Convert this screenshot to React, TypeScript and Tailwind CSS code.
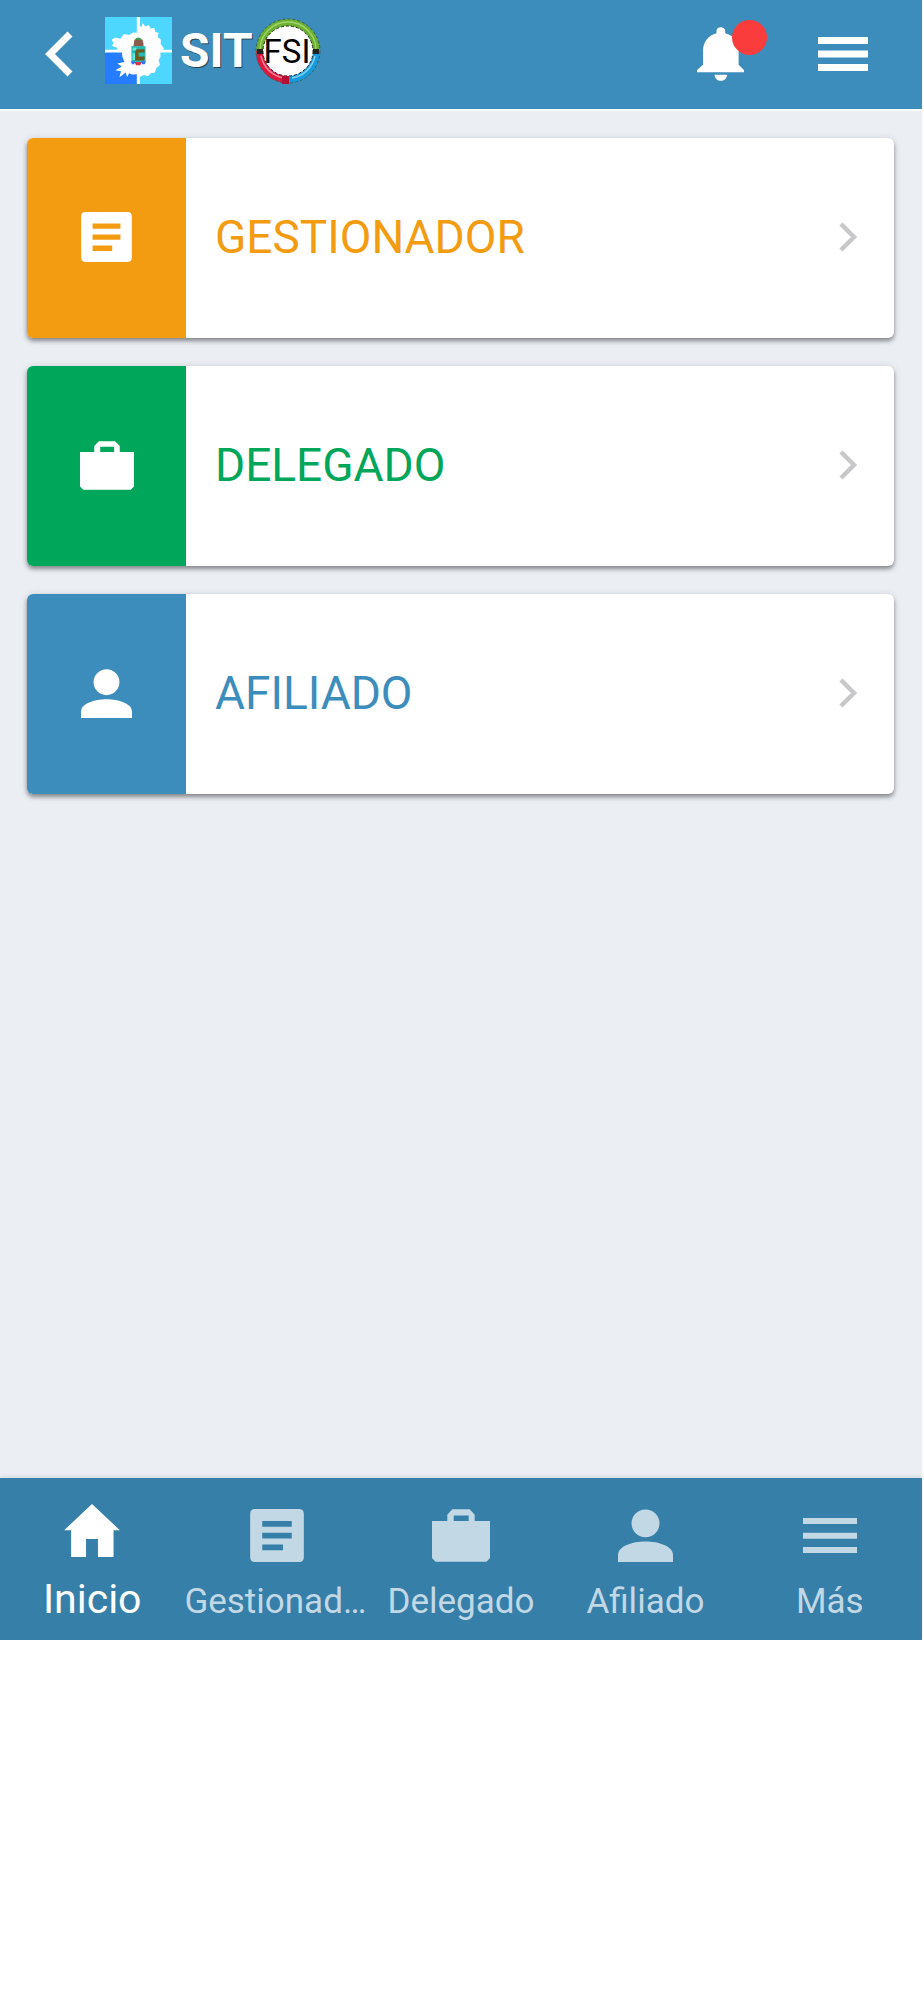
import type { ReactNode } from 'react';

type IconProps = { className?: string };

function ArticleIcon({ className }: IconProps) {
  return (
    <svg viewBox="0 0 160 158" className={className} fill="currentColor" aria-hidden="true">
      <path
        fillRule="evenodd"
        d="M14 0H146Q160 0 160 14V144Q160 158 146 158H14Q0 158 0 144V14Q0 0 14 0ZM36 36V53H124V36ZM36 71V88H124V71ZM36 106V123H98V106Z"
      />
    </svg>
  );
}

function BriefcaseIcon({ className }: IconProps) {
  return (
    <svg viewBox="0 0 163 147" className={className} fill="currentColor" aria-hidden="true">
      <path
        fillRule="evenodd"
        d="M43 33V15L57 0H106L120 15V33H163V137L153 147H10L0 137V33ZM61 17V33H103V17Z"
      />
    </svg>
  );
}

function PersonIcon({ className }: IconProps) {
  return (
    <svg viewBox="0 0 154 148" className={className} fill="currentColor" aria-hidden="true">
      <circle cx="77" cy="40" r="39" />
      <path d="M0 148V129C0 104 40 91 77 91S154 104 154 129V148Z" />
    </svg>
  );
}

function HomeIcon({ className }: IconProps) {
  return (
    <svg viewBox="0 0 168 160" className={className} fill="currentColor" aria-hidden="true">
      <path d="M84 0L168 79H149V160H102V106H66V160H21V79H0Z" />
    </svg>
  );
}

function MenuIcon({ className }: IconProps) {
  return (
    <svg viewBox="0 0 162 105" className={className} fill="currentColor" aria-hidden="true">
      <path d="M0 0H162V18H0ZM0 44H162V62H0ZM0 87H162V105H0Z" />
    </svg>
  );
}

function HeaderMenuIcon({ className }: IconProps) {
  return (
    <svg viewBox="0 0 50 34" className={className} fill="currentColor" aria-hidden="true">
      <path d="M0 0H50V7H0ZM0 13.500H50V20.500H0ZM0 27H50V34H0Z" />
    </svg>
  );
}

function BellIcon({ className }: IconProps) {
  return (
    <svg viewBox="0 0 140 160" className={className} fill="currentColor" aria-hidden="true">
      <path d="M58 18V12C58 4 63 0 71 0S84 4 84 12V18C108 24 124 44 124 70V112L140 128V134H0V128L18 112V70C18 44 34 24 58 18Z" />
      <path d="M52 142H90C88 154 81 160 71 160S54 154 52 142Z" />
    </svg>
  );
}

function CrestLogo({ className }: IconProps) {
  return (
    <svg viewBox="0 0 200 200" className={className} role="img" aria-label="Escudo">
      <path d="M0 0H200V200H0Z" fill="#4dd7ff" />
      <path d="M0 104H98V200H0Z" fill="#267cff" />
      <path d="M95 0H104V200H95ZM0 98H200V106H0Z" fill="#fff" />
      <path
        d="M112 18L121 28L131 24L136 34L147 32L150 44L160 48L157 60L167 68L166 80L176 94L165 104L166 118L160 129L164 143L153 153L149 166L137 168L128 177L117 173L105 178L96 171L80 172L72 168L66 179L62 166L43 180L48 162L31 159L50 148L37 139L58 134L52 119L50 103L36 101L36 92L20 86L26 78L20 68L30 61L46 65L56 51L72 54L84 46L97 47L101 26L109 29Z"
        fill="#fff"
      />
      <path d="M86 80L88 68L99 63L112 68L115 80V88H85Z" fill="#8a5a4c" />
      <path d="M91 64L99 61L108 64L106 69H93Z" fill="#3f9a50" />
      <path d="M79 87H121V137H79Z" fill="#25b9b4" />
      <path d="M83 92H94V100H83ZM82 108H90V128H82Z" fill="#65e8dc" />
      <path d="M94 96H118V106H100V118H118V130H90V104Z" fill="#6e5a1d" />
      <path d="M78 132H88V141H80ZM110 132H121L119 141H110Z" fill="#366eff" />
      <path d="M88 134H110L105 144H93Z" fill="#db344a" />
    </svg>
  );
}

function FsiLogo({ className }: IconProps) {
  return (
    <svg viewBox="0 0 66 66" className={className} role="img" aria-label="FSI">
      <circle cx="33" cy="33" r="27" fill="#fff" />
      <g fill="none" strokeWidth="7">
        <path d="M4.500 33A28.500 28.500 0 0 1 61.500 33" stroke="#6cb030" />
        <path d="M61.500 33A28.500 28.500 0 0 1 33 61.500" stroke="#159bdc" />
        <path d="M33 61.500A28.500 28.500 0 0 1 4.500 33" stroke="#e0163c" />
      </g>
      <circle cx="33" cy="33" r="32" fill="none" stroke="#3c5f58" strokeWidth="1" strokeDasharray="3 2" />
      <circle cx="33" cy="33" r="25" fill="none" stroke="#2a2a2a" strokeWidth="1" strokeDasharray="3 2" />
      <path d="M5 32A28 28 0 0 1 61 32" fill="none" stroke="#9fd46c" strokeWidth="1.500" />
      <path d="M60 38A28 28 0 0 1 37 60" fill="none" stroke="#7fd0f5" strokeWidth="1.500" />
      <path d="M29 60A28 28 0 0 1 6 38" fill="none" stroke="#f2839b" strokeWidth="1.500" />
      <path d="M2 31H8V36H2ZM58 31H64V36H58Z" fill="#222" />
      <path d="M27 58H34V66H27Z" fill="#b50f36" />
      <text x="32" y="45" textAnchor="middle" fontFamily="Roboto, sans-serif" fontSize="33" fill="#000">
        FSI
      </text>
    </svg>
  );
}

type CardProps = { label: string; tile: string; text: string; icon: ReactNode };

function MenuCard({ label, tile, text, icon }: CardProps) {
  return (
    <a
      href="#"
      className="flex h-[200px] overflow-hidden rounded-md bg-white shadow-[0_3px_4px_rgba(0,0,0,0.38),0_1px_8px_rgba(0,0,0,0.12)]"
    >
      <span className={`flex w-[159px] shrink-0 items-center justify-center pb-0.5 text-white ${tile}`}>{icon}</span>
      <span className={`flex flex-1 items-center justify-between pr-9 pb-0.5 pl-[29px] text-[46px] leading-none ${text}`}>
        {label}
        <svg viewBox="0 0 20 30" className="h-[30px] w-5 text-[#c8c8ca]" fill="none" aria-hidden="true">
          <path d="M3 2L16 15L3 28" stroke="currentColor" strokeWidth="4.500" />
        </svg>
      </span>
    </a>
  );
}

type TabProps = { label: string; icon: ReactNode; active?: boolean };

function Tab({ label, icon, active = false }: TabProps) {
  return (
    <a
      href="#"
      aria-current={active ? 'page' : undefined}
      className={`flex min-w-0 flex-col items-center justify-end pb-[17px] ${
        active ? 'gap-[18px] text-[41px] leading-[48px] text-white' : 'gap-[19px] text-[35px] leading-[42px] text-[#c2d8e5]'
      }`}
    >
      {icon}
      <span className="max-w-full truncate">{label}</span>
    </a>
  );
}

export default function App() {
  return (
    <div className="bg-white pr-0.5 font-[Roboto,sans-serif]">
      <header className="flex h-[109px] items-center bg-[#3c8dbc] pr-[54px] pb-2 pl-[44px] text-white">
        <button type="button" aria-label="Volver" className="mt-1.5 mr-8">
          <svg viewBox="0 0 29 46" className="h-[46px] w-[29px]" fill="none" aria-hidden="true">
            <path d="M26 3L6 23L26 43" stroke="currentColor" strokeWidth="7" />
          </svg>
        </button>
        <a href="#" className="flex items-center">
          <CrestLogo className="mr-2 h-[67px] w-[67px]" />
          <span className="text-[48px] leading-none font-bold [text-shadow:1px_1px_0_#26434f,-1px_0_0_#56879d]">SIT</span>
          <FsiLogo className="ml-0.5 h-[66px] w-[66px]" />
        </a>
        <button type="button" aria-label="Notificaciones" className="relative mt-1.5 ml-auto">
          <BellIcon className="h-[54px] w-[47px]" />
          <span className="absolute -top-[7px] -right-[23px] size-[35px] rounded-full bg-[#fa3c3c]" />
        </button>
        <button type="button" aria-label="Abrir menú" className="mt-1.5 ml-[74px]">
          <HeaderMenuIcon className="h-[34px] w-[50px]" />
        </button>
      </header>

      <main className="flex min-h-[1369px] flex-col gap-7 border-t-2 border-[#f8fbfd] bg-[#ebeff4] pr-7 pt-[27px] pl-[27px]">
        <MenuCard
          label="GESTIONADOR"
          tile="bg-[#f39c12]"
          text="text-[#f39c12]"
          icon={<ArticleIcon className="h-[50px] w-[51px]" />}
        />
        <MenuCard
          label="DELEGADO"
          tile="bg-[#00a65a]"
          text="text-[#00a65a]"
          icon={<BriefcaseIcon className="h-[49px] w-[54px]" />}
        />
        <MenuCard
          label="AFILIADO"
          tile="bg-[#3c8dbc]"
          text="text-[#3c8dbc]"
          icon={<PersonIcon className="h-[49px] w-[51px]" />}
        />
      </main>

      <nav className="grid h-[162px] grid-cols-5 bg-[#367fa9] shadow-[0_-2px_4px_rgba(0,0,0,0.08)]">
        <Tab label="Inicio" active icon={<HomeIcon className="h-[53px] w-[56px]" />} />
        <Tab label="Gestionador" icon={<ArticleIcon className="h-[53px] w-[54px]" />} />
        <Tab label="Delegado" icon={<BriefcaseIcon className="h-[53px] w-[58px]" />} />
        <Tab label="Afiliado" icon={<PersonIcon className="h-[53px] w-[55px]" />} />
        <Tab
          label="Más"
          icon={
            <span className="flex h-[53px] items-center">
              <MenuIcon className="h-[35px] w-[54px]" />
            </span>
          }
        />
      </nav>
    </div>
  );
}
